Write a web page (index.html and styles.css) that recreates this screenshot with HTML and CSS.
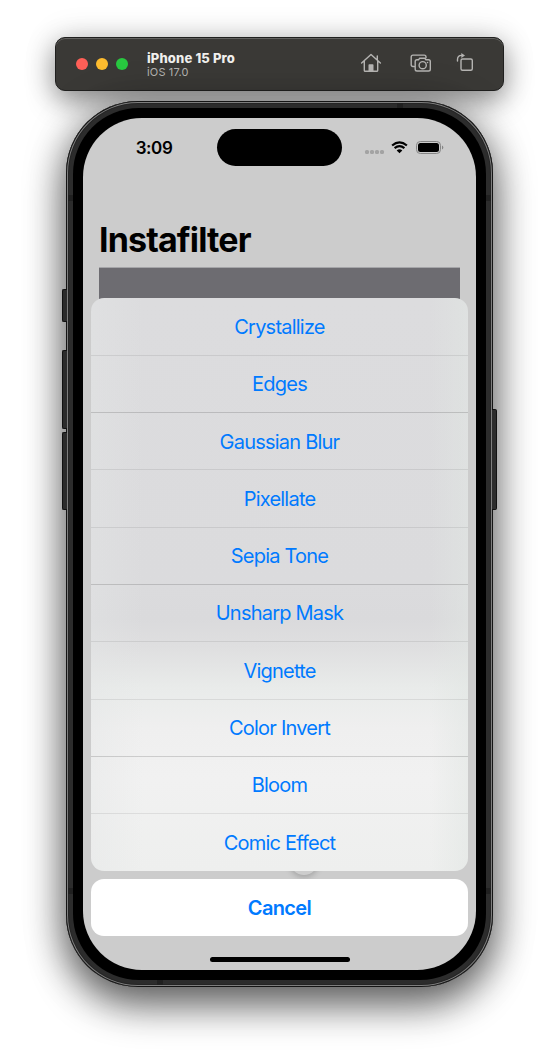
FILE: index.html
```html
<!DOCTYPE html>
<html lang="en">
<head>
<meta charset="utf-8">
<title>iPhone 15 Pro</title>
<link rel="stylesheet" href="styles.css">
</head>
<body>
<main class="stage">
  <header class="bar">
    <div class="lights"><i class="red"></i><i class="yellow"></i><i class="green"></i></div>
    <div class="device"><strong>iPhone 15 Pro</strong><span>iOS 17.0</span></div>
    <div class="tools">
      <svg width="22" height="22" viewBox="0 0 22 22"><path d="M1.600 11 11 2.500l9.400 8.500M4.300 9v9.400q0 .9.9.9h11.600q.9 0 .9-.9V9M17.300 4v4"/><path class="solid" d="M8.500 19v-6q0-.8.8-.8h3.400q.8 0 .8.800v6z"/></svg>
      <svg width="22" height="22" viewBox="0 0 22 22"><path d="M4 14.500H3q-1.800 0-1.800-1.800V5Q1.200 3.100 3 3.100h11.200Q16 3.100 16 5v.7M7 7.800h1.500l1.200-1.600h5l1.200 1.600h2.600q1.800 0 1.800 1.800v7.600q0 1.800-1.800 1.800H7q-1.800 0-1.800-1.800V9.600q0-1.800 1.800-1.800z"/><circle cx="12.700" cy="13.200" r="3.600"/><circle class="solid" cx="17.500" cy="10.500" r=".8"/></svg>
      <svg class="rotate" width="22" height="22" viewBox="0 0 22 22"><rect x="7" y="7" width="11.300" height="11.300" rx="1.500"/><path d="M3.500 9V7.500Q3.500 3.400 7.500 3.400H9"/><path class="solid" d="M7.300.9 11 3.500 7.300 6z"/></svg>
    </div>
  </header>

  <section class="phone">
    <i class="key action"></i><i class="key up"></i><i class="key down"></i><i class="key power"></i>
    <i class="band lt"></i><i class="band rt"></i><i class="band lb"></i><i class="band rb"></i><i class="band top"></i><i class="band bottom"></i>
    <div class="bezel">
      <div class="screen">
        <div class="status">
          <time>3:09</time>
          <div class="island"></div>
          <div class="signals">
            <span class="dots"><i></i><i></i><i></i><i></i></span>
            <svg class="wifi" width="17" height="13" viewBox="0 0 17 13"><path d="M1.100 4.500Q8.500-1.800 15.900 4.500M3.600 7.200q4.900-4.100 9.800 0"/><path class="wedge" d="M5.700 9.400q2.800-2.200 5.600 0L8.500 12.300z"/></svg>
            <svg class="battery" width="28" height="13" viewBox="0 0 28 13"><rect class="shell" x=".5" y=".5" width="24" height="12" rx="3.800"/><rect x="2" y="2" width="21" height="9" rx="2.500"/><path class="tip" d="M26 4.500q1.300.5 1.300 2t-1.300 2z"/></svg>
          </div>
        </div>
        <h1>Instafilter</h1>
        <div class="photo"></div>
        <i class="knob"></i>
        <div class="sheet">
          <ul>
            <li>Crystallize</li><li>Edges</li><li>Gaussian Blur</li><li>Pixellate</li><li>Sepia Tone</li><li>Unsharp Mask</li><li>Vignette</li><li>Color Invert</li><li>Bloom</li><li>Comic Effect</li>
          </ul>
          <button>Cancel</button>
          <div class="home"></div>
        </div>
      </div>
    </div>
  </section>
</main>
</body>
</html>
```
FILE: styles.css
```css
* { box-sizing: border-box; }
body { margin: 0; background: #fff; font-family: Inter, "Liberation Sans", sans-serif; }
i { display: block; }
.stage { width: 559px; height: 1062px; overflow: hidden; padding-top: 37px; display: flex; flex-direction: column; align-items: center; gap: 10px; }

.bar { position: relative; width: 449px; height: 54px; flex: none; display: flex; align-items: center; padding: 0 27px 0 20px; background: #3a3936; border: 1px solid #20201f; border-radius: 10px; box-shadow: inset 0 1px #62615f, 0 10px 28px rgba(0,0,0,.42), 0 0 34px rgba(0,0,0,.12); }
.lights { display: flex; gap: 8px; }
.lights i { width: 12px; height: 12px; border-radius: 50%; }
.red { background: #ff5f57; }
.yellow { background: #febc2e; }
.green { background: #28c840; }
.device { margin: 0 0 0 19px; display: flex; flex-direction: column; color: #f0efed; }
.device strong { font-size: 13px; line-height: 16px; font-weight: 800; letter-spacing: .15px; }
.device span { font-size: 11px; line-height: 13px; color: #b5b4b2; letter-spacing: .15px; }
.tools { margin-left: auto; display: flex; gap: 28px; margin-top: -2px; }
.tools svg { fill: none; stroke: #b5b4b2; stroke-width: 1.4; stroke-linecap: round; stroke-linejoin: round; }
.tools .solid { fill: #b5b4b2; stroke: none; }
.tools .rotate { margin-left: -6px; }

.phone { position: relative; width: 427px; height: 886px; flex: none; padding: 7px; border-radius: 72px; background: #2c2c2c; box-shadow: inset 0 0 0 1px #151515, inset 0 0 0 2px #7e7e7e, inset 0 0 0 3px #252525, 0 20px 38px rgba(0,0,0,.48), 0 4px 40px rgba(0,0,0,.38); }
.bezel { height: 872px; padding: 10px; border-radius: 66px; background: #000; }
.screen { position: relative; height: 852px; overflow: hidden; border-radius: 59px; background: #ccc; color: #000; }

.key { position: absolute; width: 5px; background: #2c2c2c; border: 1px solid #111; }
.action, .up, .down { left: -4px; border-right: 0; border-radius: 2px 0 0 2px; }
.action { top: 188px; height: 33px; }
.up { top: 249px; height: 79px; }
.down { top: 331px; height: 78px; }
.power { right: -4px; top: 308px; height: 101px; border-left: 0; border-radius: 0 2px 2px 0; }
.band { position: absolute; background: #202020; width: 5px; height: 6px; }
.lt { left: 2px; top: 94px; }
.rt { right: 2px; top: 94px; }
.lb { left: 2px; top: 787px; }
.rb { right: 2px; top: 787px; }
.top { left: 331px; top: 2px; width: 6px; height: 5px; }
.bottom { left: 91px; bottom: 2px; width: 6px; height: 5px; }

.status { height: 59px; display: grid; grid-template-columns: 134px 125px 134px; align-items: center; }
time { padding-left: 8px; text-align: center; font-size: 17px; font-weight: 600; letter-spacing: -.4px; }
.island { height: 37px; border-radius: 19px; background: #000; }
.signals { display: flex; align-items: center; padding-left: 23px; margin-top: -1px; }
.dots { display: flex; gap: 1px; margin-top: 9px; }
.dots i { width: 4px; height: 4px; border-radius: 1.500px; background: #a3a3a3; }
.wifi { margin-left: 7px; }
.wifi path { fill: none; stroke: #000; stroke-width: 2.200; }
.wifi .wedge { fill: #000; stroke: none; }
.battery { margin-left: 8px; }
.battery .shell { fill: none; stroke: #858585; }
.battery .tip { fill: #858585; }

h1 { margin: 42px 16px 0; font-size: 34px; line-height: 41px; font-weight: 700; letter-spacing: -.85px; }
.photo { margin: 7px 16px 0; height: 360px; background: #6d6c71; border-top: 1px solid #a5a5a8; }
.knob { position: absolute; left: 207px; top: 729px; width: 28px; height: 28px; border-radius: 50%; background: #cdcdcd; box-shadow: 0 2px 6px rgba(0,0,0,.22); }
.sheet { position: absolute; left: 8px; right: 8px; bottom: 8px; display: flex; flex-direction: column; align-items: center; }
ul { width: 100%; height: 573px; margin: 0; padding: .6px 0 0; list-style: none; overflow: hidden; display: grid; grid-template-rows: repeat(9, 57.300px) 1fr; border-radius: 13px; background: linear-gradient(90deg, rgba(228,230,230,.4), transparent 14%, transparent 90%, rgba(225,230,227,.55)), linear-gradient(#dcdcde 0, #dbdbdd 50%, #dadadc 56%, #dfdfe0 61%, #e9ebea 68%, #efefef 75%, #f1f1f1 84%, #eeefee 100%); }
li { display: flex; align-items: center; justify-content: center; padding-top: .4px; color: #007aff; font-size: 20px; letter-spacing: -.78px; border-bottom: 1px solid rgba(0,0,0,.08); }
li:nth-child(3n+2) { border-color: rgba(0,0,0,.15); }
li:last-child { border: 0; }
button { width: 100%; height: 57px; margin-top: 8px; padding: 0; border: 0; border-radius: 13px; background: #fff; color: #007aff; font: 600 20px Inter, sans-serif; letter-spacing: -.65px; }
.home { width: 140px; height: 5px; margin-top: 21px; border-radius: 3px; background: #000; }
```
